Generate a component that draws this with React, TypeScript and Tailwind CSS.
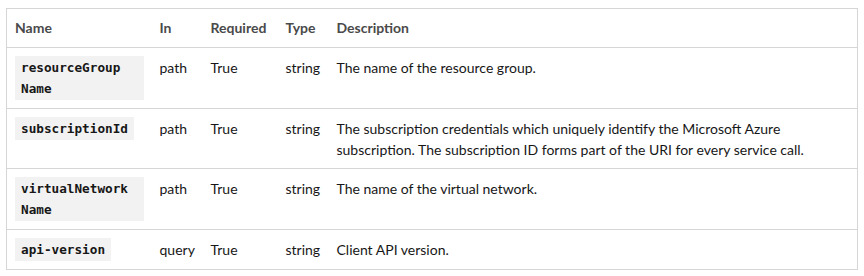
const ROWS = [
  { name: ["resourceGroup", "Name"], in: "path", required: "True", type: "string", desc: "The name of the resource group." },
  { name: ["subscriptionId"], in: "path", required: "True", type: "string", desc: "The subscription credentials which uniquely identify the Microsoft Azure subscription. The subscription ID forms part of the URI for every service call." },
  { name: ["virtualNetwork", "Name"], in: "path", required: "True", type: "string", desc: "The name of the virtual network." },
  { name: ["api-version"], in: "query", required: "True", type: "string", desc: "Client API version." },
];

function Code({ parts }: { parts: string[] }) {
  return (
    <code className="inline-block bg-[#f2f2f2] px-[6px] py-px font-['DejaVu_Sans_Mono',monospace] text-[12.7px] font-bold leading-[21px] text-[#171717]">
      {parts.map((p, i) => (
        <span key={i}>
          {i > 0 && <wbr />}
          {p}
        </span>
      ))}
    </code>
  );
}

export default function App() {
  return (
    <div className="bg-white pl-[6px] pt-[8px] font-['Lato',sans-serif] text-[14px] leading-[21px] text-[#171717]">
      <table className="w-[852px] table-fixed border-collapse border border-[#d6d6d6]">
        <colgroup>
          <col className="w-[145px]" />
          <col className="w-[51px]" />
          <col className="w-[75px]" />
          <col className="w-[51px]" />
          <col />
        </colgroup>
        <thead>
          <tr className="border-b border-[#d6d6d6] text-left text-[#4a4a4a]">
            <th className="px-[8px] pt-[8px] pb-[9px] font-bold">Name</th>
            <th className="px-[8px] pt-[8px] pb-[9px] font-bold">In</th>
            <th className="px-[8px] pt-[8px] pb-[9px] font-bold">Required</th>
            <th className="px-[8px] pt-[8px] pb-[9px] font-bold">Type</th>
            <th className="px-[8px] pt-[8px] pb-[9px] font-bold">Description</th>
          </tr>
        </thead>
        <tbody>
          {ROWS.map((r) => (
            <tr key={r.name.join("")} className="border-b border-[#d6d6d6] align-top">
              <td className="px-[8px] pt-[8px] pb-[8px]">
                <Code parts={r.name} />
              </td>
              <td className="px-[8px] pt-[9px] pb-[8px]">{r.in}</td>
              <td className="px-[8px] pt-[9px] pb-[8px]">{r.required}</td>
              <td className="px-[8px] pt-[9px] pb-[8px]">{r.type}</td>
              <td className="px-[8px] pt-[9px] pb-[8px]">{r.desc}</td>
            </tr>
          ))}
        </tbody>
      </table>
    </div>
  );
}
